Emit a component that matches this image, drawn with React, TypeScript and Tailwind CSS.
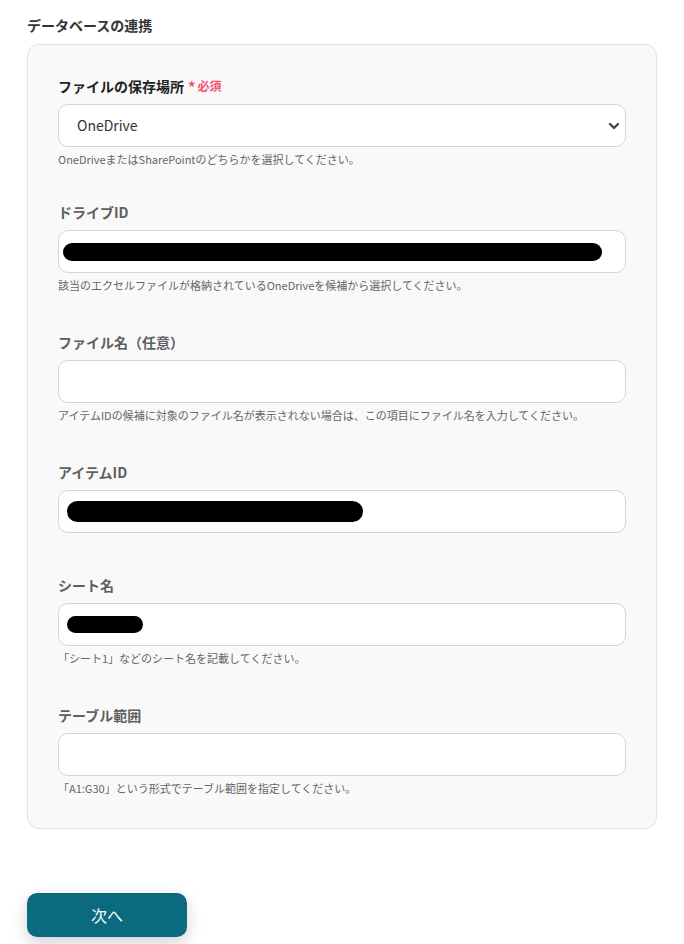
import React from 'react';
import { ChevronDown } from 'lucide-react';

interface FieldProps {
  label: string;
  labelClass?: string;
  required?: boolean;
  help?: string;
  children: React.ReactNode;
}

const Field: React.FC<FieldProps> = ({ label, labelClass = 'text-[#5f5f5f]', required, help, children }) => (
  <div className="flex flex-col">
    <div className="flex items-center h-5 mb-2">
      <span className={`text-[14px] font-bold leading-5 ${labelClass}`}>{label}</span>
      {required && (
        <span className="ml-1 flex items-center text-[12px] font-bold text-[#f0506e]">
          <span className="text-[15px] mr-0.5 leading-none">*</span>必須
        </span>
      )}
    </div>
    {children}
    {help && <p className="mt-1 text-[11px] leading-[16px] text-[#666]">{help}</p>}
  </div>
);

const Box: React.FC<{ children?: React.ReactNode }> = ({ children }) => (
  <div className="h-[43px] w-full rounded-[10px] border border-[#d4d6de] bg-white flex items-center px-1">
    {children}
  </div>
);

const Redact: React.FC<{ w: string; h: string; x: string }> = ({ w, h, x }) => (
  <div className={`${w} ${h} ${x} rounded-full bg-black`} />
);

export default function App() {
  return (
    <div className="min-h-[944px] bg-white px-[27px] pt-[15px] font-['Noto_Sans_CJK_JP','Noto_Sans',sans-serif]">
      <h2 className="text-[14px] font-bold leading-5 text-[#333]">データベースの連携</h2>
      <div className="mt-[9px] w-[630px] rounded-[12px] border border-[#e2e2e6] bg-[#f9f9f9] px-[30px] pt-[31px] pb-[32px] flex flex-col gap-[39px]">
        <div className="-mb-[4px]">
          <Field
            label="ファイルの保存場所"
            labelClass="text-[#222]"
            required
            help="OneDriveまたはSharePointのどちらかを選択してください。"
          >
            <div className="h-[43px] w-full rounded-[10px] border border-[#d4d6de] bg-white flex items-center justify-between pl-[18px] pr-[3px]">
              <span className="text-[14px] text-[#333]">OneDrive</span>
              <ChevronDown className="w-4 h-4 text-[#444]" strokeWidth={3.5} />
            </div>
          </Field>
        </div>
        <Field label="ドライブID" help="該当のエクセルファイルが格納されているOneDriveを候補から選択してください。">
          <Box>
            <Redact w="w-[539px]" h="h-[18px]" x="ml-[0px]" />
          </Box>
        </Field>
        <Field
          label="ファイル名（任意）"
          help="アイテムIDの候補に対象のファイル名が表示されない場合は、この項目にファイル名を入力してください。"
        >
          <Box />
        </Field>
        <div className="pb-[3px]">
          <Field label="アイテムID">
            <Box>
              <Redact w="w-[296px]" h="h-[21px]" x="ml-[4px]" />
            </Box>
          </Field>
        </div>
        <Field label="シート名" help="「シート1」などのシート名を記載してください。">
          <Box>
            <Redact w="w-[76px]" h="h-[17px]" x="ml-[4px]" />
          </Box>
        </Field>
        <Field label="テーブル範囲" help="「A1:G30」という形式でテーブル範囲を指定してください。">
          <Box />
        </Field>
      </div>
      <button className="mt-[64px] w-[160px] h-[44px] rounded-[10px] bg-[#0b6a80] text-white text-[16px] shadow-[0_6px_16px_rgba(0,0,0,0.18)]">
        次へ
      </button>
    </div>
  );
}
